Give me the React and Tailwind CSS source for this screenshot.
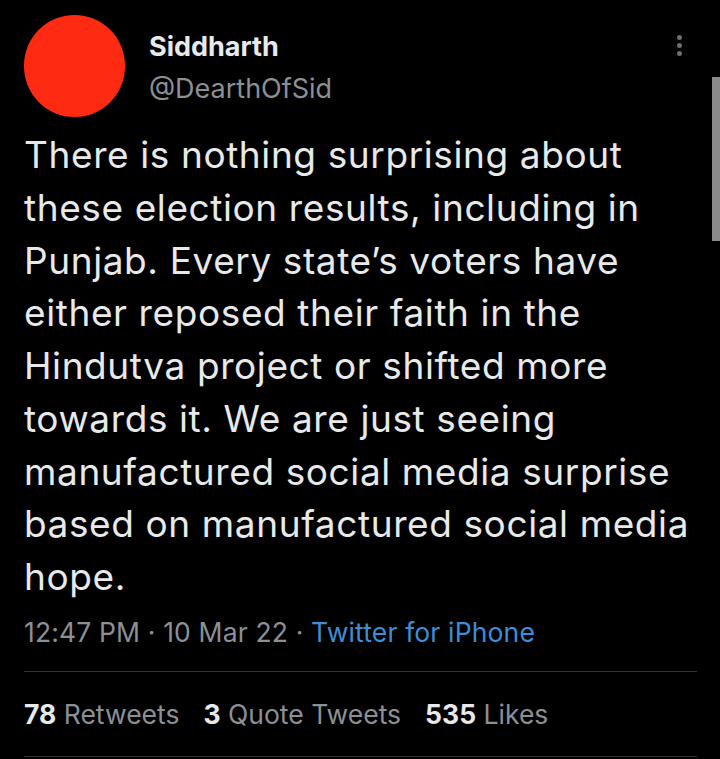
const lines = [
  "There is nothing surprising about",
  "these election results, including in",
  "Punjab. Every state’s voters have",
  "either reposed their faith in the",
  "Hindutva project or shifted more",
  "towards it. We are just seeing",
  "manufactured social media surprise",
  "based on manufactured social media",
  "hope.",
];

export default function App() {
  return (
    <div
      className="relative w-[720px] h-[759px] bg-black overflow-hidden text-[#e7e9ea]"
      style={{ fontFamily: "Inter, Roboto, sans-serif" }}
    >
      {/* Scrollbar */}
      <div className="absolute right-0 top-[77px] w-[8px] h-[164px] bg-[#8a8a8a]" />

      <div className="px-[24px] pt-[15px]">
        {/* Header */}
        <div className="flex items-start">
          <div className="w-[101px] h-[102px] rounded-full bg-[#ff2a12] shrink-0" />
          <div className="ml-[24px] pt-[16px] flex-1">
            <div className="text-[27px] leading-[32px] font-bold text-[#e7e9ea]">Siddharth</div>
            <div className="text-[27px] leading-[32px] mt-[10px] text-[#8b9096]">@DearthOfSid</div>
          </div>
          <div className="pt-[20px] pr-[14px] flex flex-col gap-[3px]">
            <span className="w-[5px] h-[5px] rounded-full bg-[#6e6e6e]" />
            <span className="w-[5px] h-[5px] rounded-full bg-[#6e6e6e]" />
            <span className="w-[5px] h-[5px] rounded-full bg-[#6e6e6e]" />
          </div>
        </div>

        {/* Tweet body */}
        <p className="mt-[12px] text-[37px] leading-[52.75px] tracking-[0.6px] text-[#e7e9ea] whitespace-nowrap">
          {lines.map((l) => (
            <span key={l} className="block">
              {l}
            </span>
          ))}
        </p>

        {/* Timestamp */}
        <div className="mt-[12px] text-[26.5px] leading-[32px] tracking-[0.15px] text-[#8b9096]">
          12:47 PM · 10 Mar 22 · <span className="text-[#3a8fd8]">Twitter for iPhone</span>
        </div>

        <div className="mt-[23px] w-[673px] h-px bg-[#2f3336]" />

        {/* Stats */}
        <div className="h-[84px] pt-[2px] flex items-center gap-[24px] text-[26.5px] text-[#8b9096]">
          <span>
            <span className="font-bold text-[#e7e9ea]">78</span> Retweets
          </span>
          <span>
            <span className="font-bold text-[#e7e9ea]">3</span> Quote Tweets
          </span>
          <span>
            <span className="font-bold text-[#e7e9ea]">535</span> Likes
          </span>
        </div>
        <div className="w-[673px] h-px bg-[#2f3336]" />
      </div>
    </div>
  );
}
